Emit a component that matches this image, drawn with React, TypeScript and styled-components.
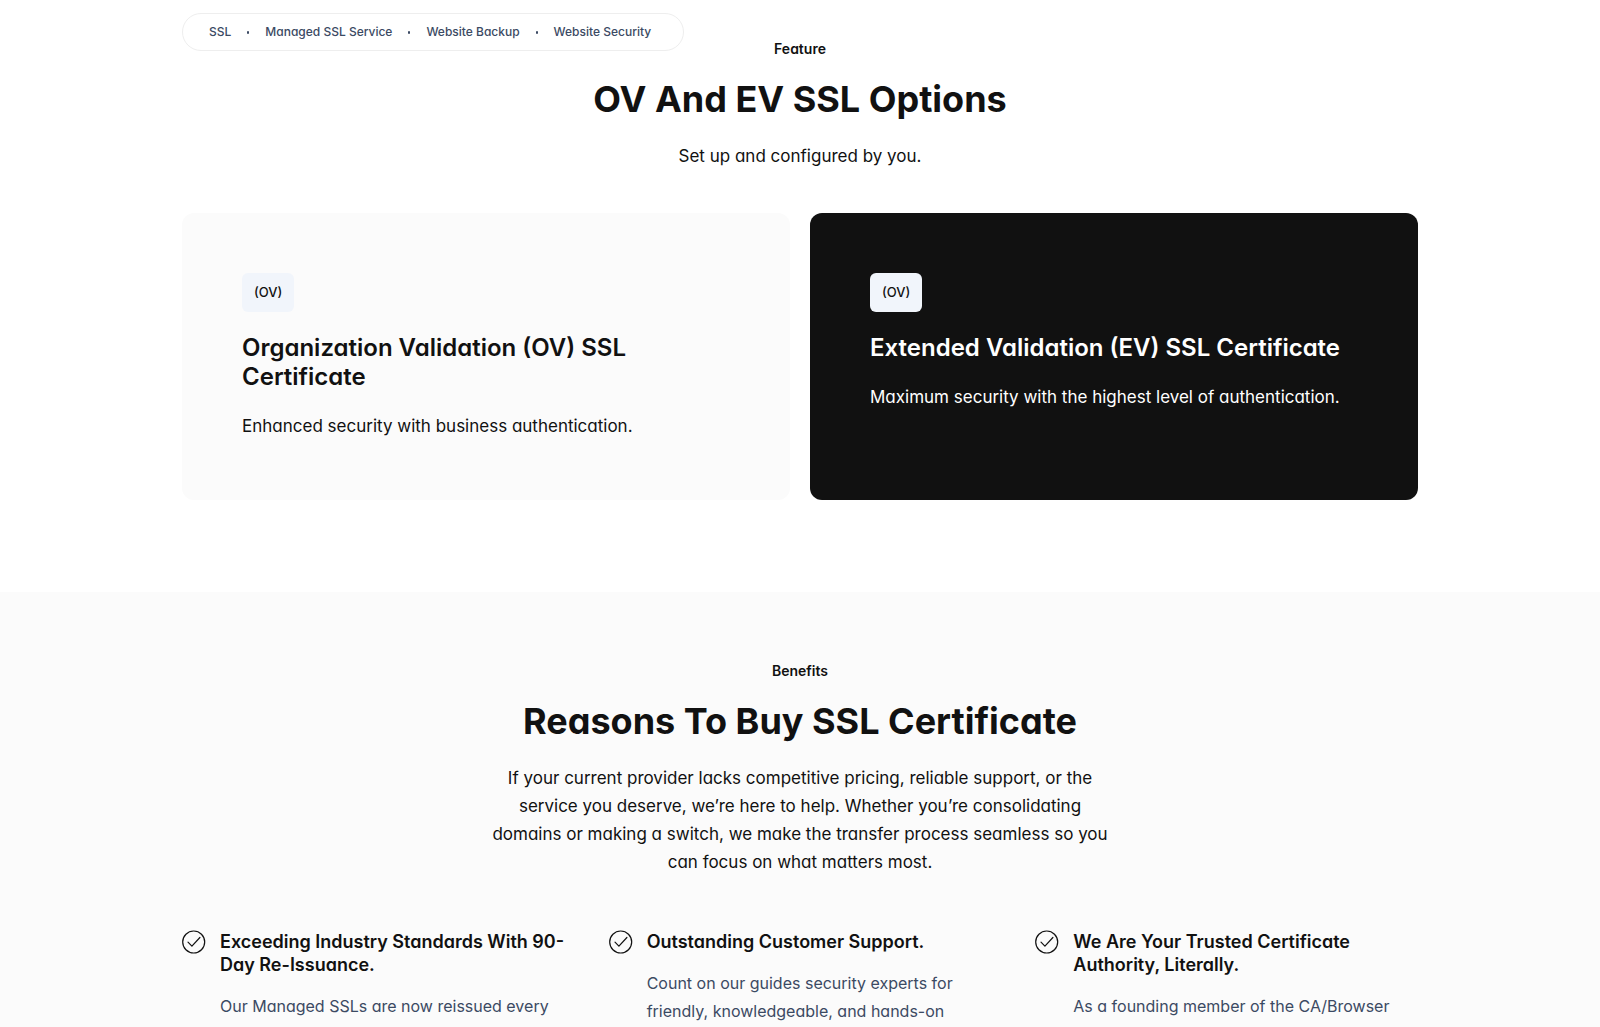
import React from 'react';
import styled, { createGlobalStyle } from 'styled-components';

const ink = '#111111';
const slate = '#3b4a63';
const tint = '#fbfbfb';

const GlobalStyle = createGlobalStyle`
  *, *::before, *::after { box-sizing: border-box; }
  html, body { margin: 0; padding: 0; }
  body {
    background: #ffffff;
    color: ${ink};
    font-family: Inter, "Liberation Sans", sans-serif;
    font-feature-settings: "cv11";
    font-size: 16px;
    line-height: 28px;
    -webkit-font-smoothing: antialiased;
  }
  h2, h3, p, ul { margin: 0; padding: 0; }
  #root { height: 100vh; overflow: hidden; }
`;

const Container = styled.div`
  width: 100%;
  max-width: 1284px;
  margin: 0 auto;
  padding: 0 24px;
`;

const StickyBar = styled.div`
  position: absolute;
  top: 13px;
  left: 0;
  right: 0;
`;

const NavPill = styled.nav`
  display: inline-flex;
  align-items: center;
  gap: 16px;
  height: 38px;
  padding: 0 32px 0 26px;
  border: 1px solid #eeeeee;
  border-radius: 19px;
  background: #ffffff;
`;

const NavLink = styled.a`
  color: ${slate};
  font-size: 12px;
  line-height: 20px;
  font-weight: 500;
  text-decoration: none;
  white-space: nowrap;
`;

const NavDot = styled.span`
  width: 2px;
  height: 3px;
  border-radius: 1px;
  background: ${slate};
`;

const Section = styled.section<{ $tinted?: boolean }>`
  padding: ${p => (p.$tinted ? '68px 0 92px' : '38px 0 92px')};
  background: ${p => (p.$tinted ? tint : '#ffffff')};
`;

const Intro = styled.header`
  max-width: 624px;
  margin: 0 auto;
  text-align: center;
`;

const Eyebrow = styled.p`
  font-size: 14px;
  line-height: 22px;
  font-weight: 600;
`;

const Title = styled.h2`
  margin: 16px 0 20px;
  font-size: 36px;
  line-height: 46px;
  font-weight: 700;
`;

const Lead = styled.p`
  font-size: 17px;
  line-height: 28px;
`;

const Cards = styled.div`
  display: grid;
  grid-template-columns: repeat(2, minmax(0, 1fr));
  gap: 20px;
  margin-top: 43px;
`;

const Card = styled.article<{ $dark?: boolean }>`
  min-height: 287px;
  padding: 60px;
  border-radius: 12px;
  color: ${p => (p.$dark ? '#ffffff' : ink)};
  background: ${p => (p.$dark ? ink : tint)};
`;

const Badge = styled.span`
  display: inline-block;
  padding: 10px 12px;
  border-radius: 6px;
  color: ${ink};
  background: #f1f5fb;
  font-size: 13px;
  line-height: 19px;
  font-weight: 500;
  vertical-align: top;
`;

const CardTitle = styled.h3`
  margin: 21px 0;
  font-size: 24px;
  line-height: 29px;
  font-weight: 600;
`;

const Benefits = styled.ul`
  display: grid;
  grid-template-columns: repeat(3, minmax(0, 1fr));
  gap: 44px;
  margin-top: 54px;
  list-style: none;
`;

const Benefit = styled.li`
  display: flex;
  align-items: flex-start;
  gap: 14px;
  color: ${slate};
`;

const CheckMark = styled.svg`
  flex: none;
  width: 24px;
  height: 24px;
  color: ${ink};
`;

const BenefitTitle = styled.h3`
  margin-bottom: 16px;
  color: ${ink};
  font-size: 18px;
  line-height: 23px;
  font-weight: 600;
`;

const navItems = ['SSL', 'Managed SSL Service', 'Website Backup', 'Website Security'];

const benefits = [
  { title: 'Exceeding Industry Standards With 90-Day Re-Issuance.', text: 'Our Managed SSLs are now reissued every' },
  { title: 'Outstanding Customer Support.', text: 'Count on our guides security experts for friendly, knowledgeable, and hands-on' },
  { title: 'We Are Your Trusted Certificate Authority, Literally.', text: 'As a founding member of the CA/Browser' },
];

function CheckIcon() {
  return (
    <CheckMark viewBox="0 0 24 24" fill="none" stroke="currentColor" strokeWidth="1.2" aria-hidden="true">
      <circle cx="11.7" cy="12" r="11" />
      <path d="M6 12.2l3.9 4 8-8.7" strokeLinecap="round" strokeLinejoin="round" />
    </CheckMark>
  );
}

export default function App() {
  return (
    <>
      <GlobalStyle />
      <StickyBar>
        <Container>
          <NavPill aria-label="Products">
            {navItems.map((item, i) => (
              <React.Fragment key={item}>
                {i > 0 && <NavDot />}
                <NavLink href="#">{item}</NavLink>
              </React.Fragment>
            ))}
          </NavPill>
        </Container>
      </StickyBar>
      <main>
        <Section>
          <Container>
            <Intro>
              <Eyebrow>Feature</Eyebrow>
              <Title>OV And EV SSL Options</Title>
              <Lead>Set up and configured by you.</Lead>
            </Intro>
            <Cards>
              <Card>
                <Badge>(OV)</Badge>
                <CardTitle>Organization Validation (OV) SSL Certificate</CardTitle>
                <Lead>Enhanced security with business authentication.</Lead>
              </Card>
              <Card $dark>
                <Badge>(OV)</Badge>
                <CardTitle>Extended Validation (EV) SSL Certificate</CardTitle>
                <Lead>Maximum security with the highest level of authentication.</Lead>
              </Card>
            </Cards>
          </Container>
        </Section>
        <Section $tinted>
          <Container>
            <Intro>
              <Eyebrow>Benefits</Eyebrow>
              <Title>Reasons To Buy SSL Certificate</Title>
              <Lead>
                If your current provider lacks competitive pricing, reliable support, or the service you deserve,
                we’re here to help. Whether you’re consolidating domains or making a switch, we make the transfer
                process seamless so you can focus on what matters most.
              </Lead>
            </Intro>
            <Benefits>
              {benefits.map(b => (
                <Benefit key={b.title}>
                  <CheckIcon />
                  <div>
                    <BenefitTitle>{b.title}</BenefitTitle>
                    <p>{b.text}</p>
                  </div>
                </Benefit>
              ))}
            </Benefits>
          </Container>
        </Section>
      </main>
    </>
  );
}
